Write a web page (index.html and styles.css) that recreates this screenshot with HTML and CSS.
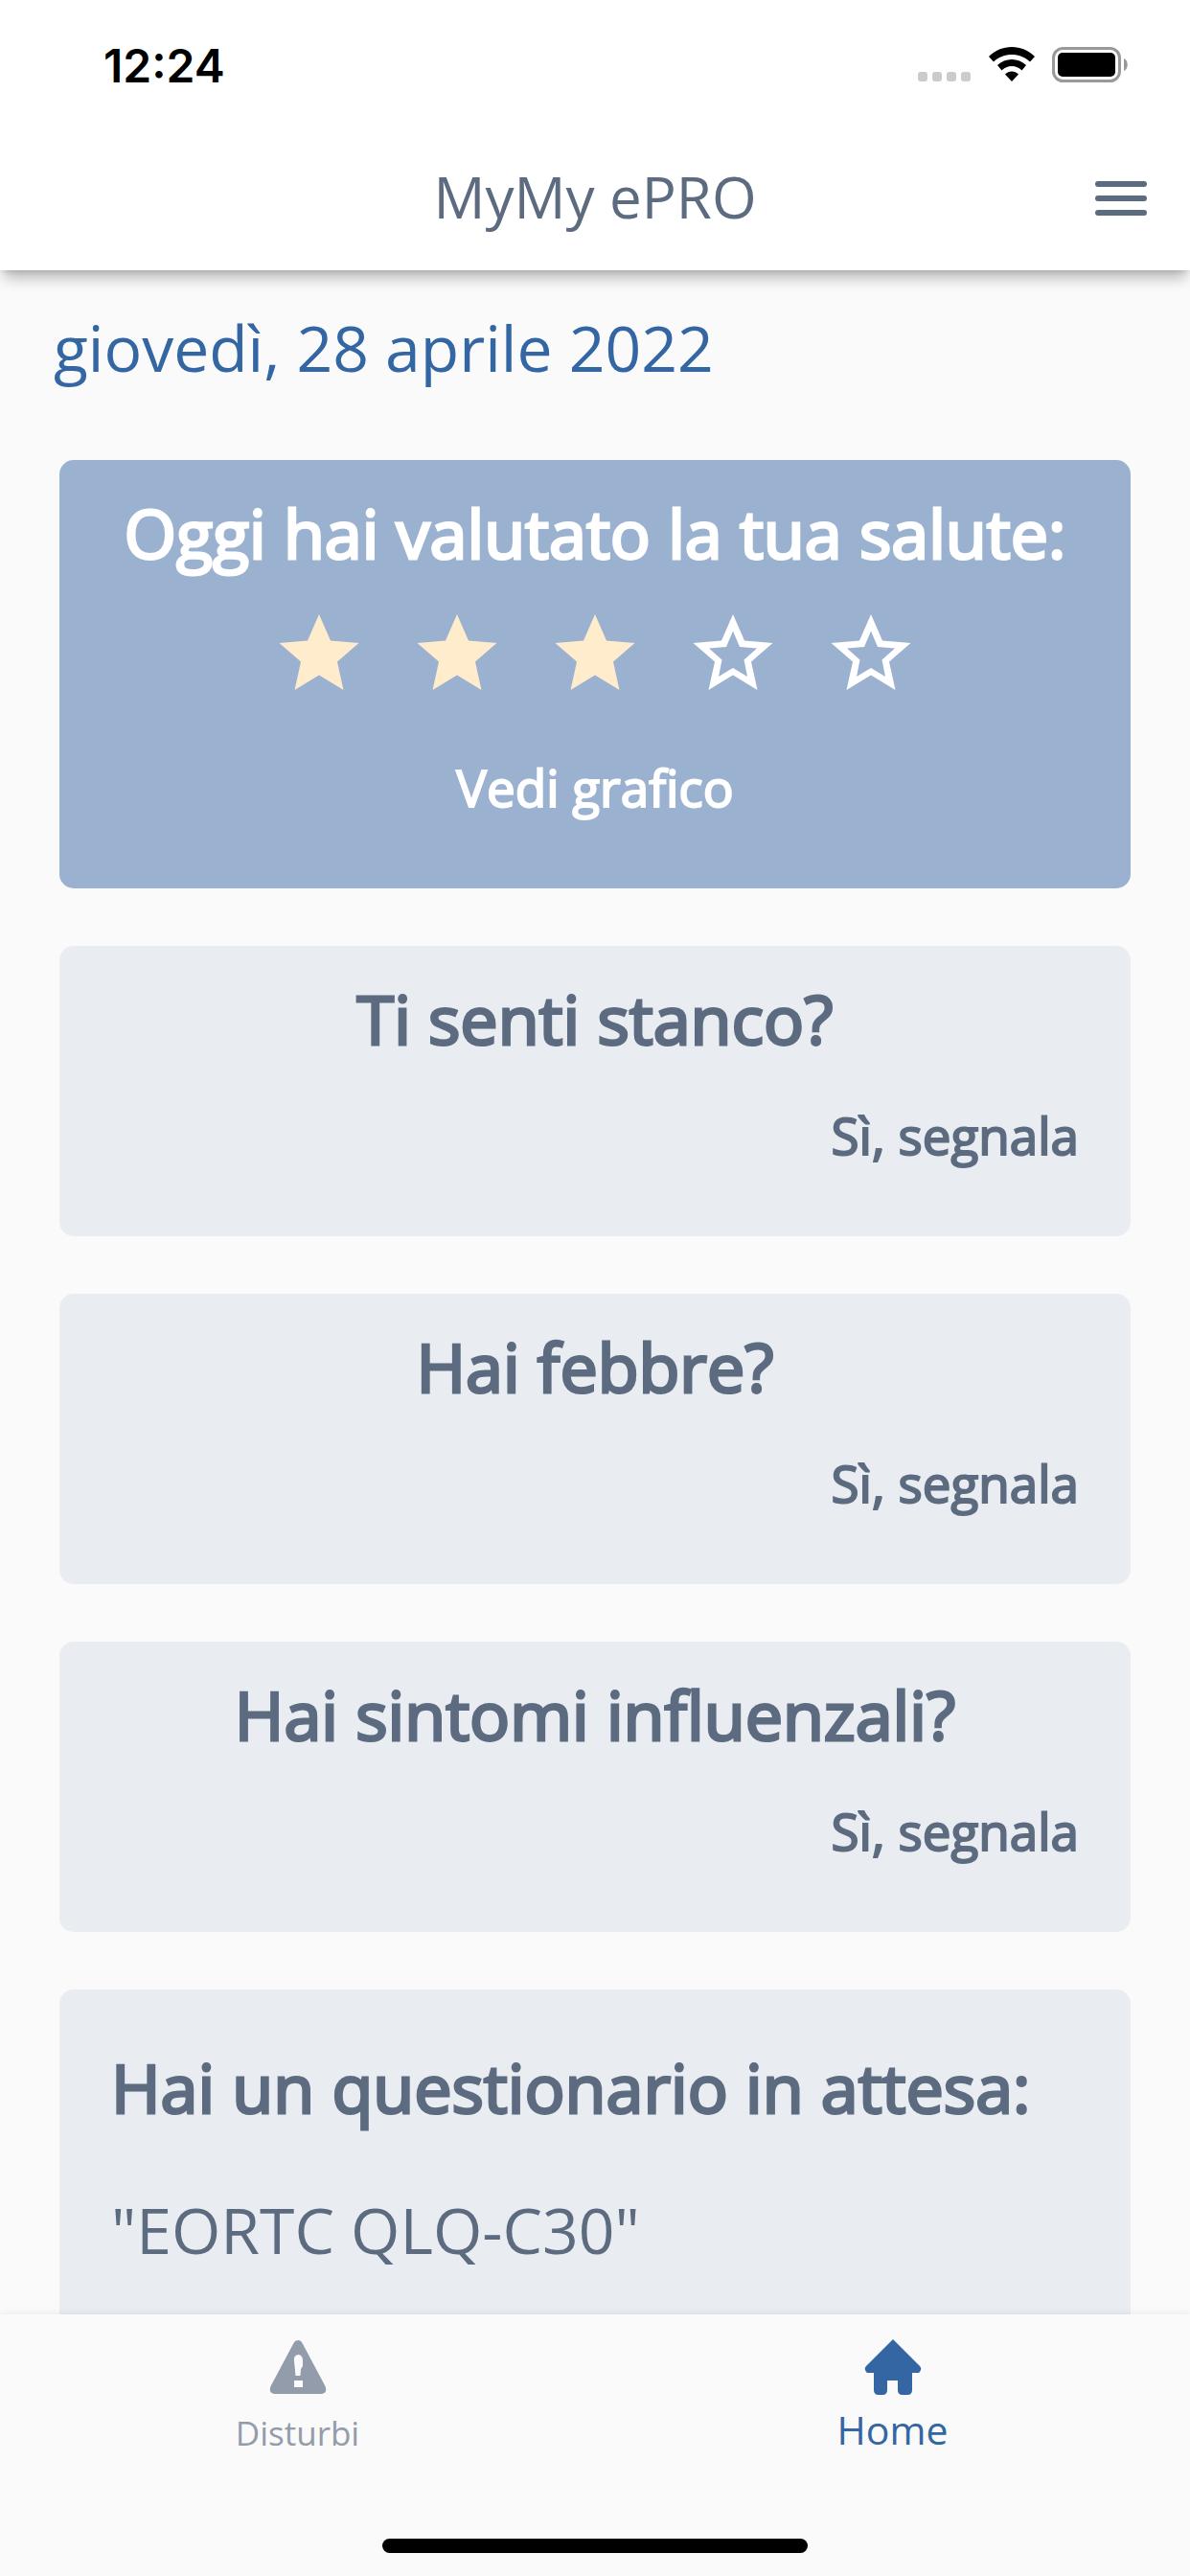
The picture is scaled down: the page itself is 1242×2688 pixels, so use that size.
FILE: index.html
```html
<!DOCTYPE html>
<html lang="it">
<head>
  <meta charset="UTF-8">
  <meta name="viewport" content="width=device-width, initial-scale=1">
  <title>MyMy ePRO</title>
  <link rel="stylesheet" href="styles.css">
</head>
<body>

<!-- Star shapes shared by the rating row -->
<svg class="sprite" aria-hidden="true">
  <symbol id="star-full" viewBox="0 0 84 80">
    <path d="M42 0L54 27.500L83.500 30L61 49.500L67.500 79L42 63.500L16.500 79L23 49.500L0.500 30L30 27.500Z"/>
  </symbol>
  <symbol id="star-empty" viewBox="0 0 84 80">
    <path fill-rule="evenodd" d="M42 0L54 27.500L83.500 30L61 49.500L67.500 79L42 63.500L16.500 79L23 49.500L0.500 30L30 27.500ZM42 17.500L35 34L17 35.500L30.500 47.500L27 65L42 56L57 65L53.500 47.500L67 35.500L49 34Z"/>
  </symbol>
</svg>

<header class="header">
  <div class="status-bar">
    <span class="clock">12:24</span>
    <div class="status-icons">
      <svg width="56" height="38" viewBox="0 0 56 38" fill="#cbcbcb">
        <rect x="0" y="26" width="10" height="10" rx="3"/>
        <rect x="15" y="26" width="10" height="10" rx="3"/>
        <rect x="30" y="26" width="10" height="10" rx="3"/>
        <rect x="45" y="26" width="10" height="10" rx="3"/>
      </svg>
      <svg width="48" height="38" viewBox="0 0 48 38">
        <path d="M24 0C33 0 41.500 3.500 48 10L43 15.500C38 10.500 31 8 24 8S10 10.500 5 15.500L0 10C6.500 3.500 15 0 24 0Z"/>
        <path d="M24 13C29.500 13 35 15 39 19L34.500 24.500C31.500 21.500 28 20 24 20S16.500 21.500 13.500 24.500L9 19C13 15 18.500 13 24 13Z"/>
        <path d="M24 25.500C26.500 25.500 29 26.500 31 28.500L24 36L17 28.500C19 26.500 21.500 25.500 24 25.500Z"/>
      </svg>
      <svg width="80" height="38" viewBox="0 0 80 38">
        <rect x="1.500" y="1.500" width="69" height="34" rx="10" fill="none" stroke="#999" stroke-width="3"/>
        <rect x="6" y="6" width="60" height="25" rx="5"/>
        <path d="M75 12C80 14 80 23 75 25Z" fill="#999"/>
      </svg>
    </div>
  </div>
  <div class="app-bar">
    <h1>MyMy ePRO</h1>
    <button class="menu" type="button" aria-label="Menu">
      <span></span>
      <span></span>
      <span></span>
    </button>
  </div>
</header>

<main class="content">
  <p class="date">giovedì, 28 aprile 2022</p>

  <section class="card rating">
    <h2>Oggi hai valutato la tua salute:</h2>
    <div class="stars" role="img" aria-label="3 / 5">
      <svg class="star full"><use href="#star-full"/></svg>
      <svg class="star full"><use href="#star-full"/></svg>
      <svg class="star full"><use href="#star-full"/></svg>
      <svg class="star"><use href="#star-empty"/></svg>
      <svg class="star"><use href="#star-empty"/></svg>
    </div>
    <button class="action" type="button">Vedi grafico</button>
  </section>

  <section class="card question">
    <h2>Ti senti stanco?</h2>
    <button class="action" type="button">Sì, segnala</button>
  </section>

  <section class="card question">
    <h2>Hai febbre?</h2>
    <button class="action" type="button">Sì, segnala</button>
  </section>

  <section class="card question">
    <h2>Hai sintomi influenzali?</h2>
    <button class="action" type="button">Sì, segnala</button>
  </section>

  <section class="card survey">
    <h2>Hai un questionario in attesa:</h2>
    <p>"EORTC QLQ-C30"</p>
  </section>
</main>

<footer class="footer">
  <nav class="tabs">
    <a class="tab" href="#disturbi">
      <svg width="60" height="58" viewBox="0 0 60 58">
        <path fill="currentColor" fill-rule="evenodd" d="M30 1Q33 1 34.500 4L58.500 49Q61 56 55 57H5Q-1 56 1.500 49L25.500 4Q27 1 30 1ZM30 16Q25 17 26 23L27.500 38H32.500L33 31L35 28V21Q34 16 30 16ZM26 43V50H35V43Z"/>
      </svg>
      <span>Disturbi</span>
    </a>
    <a class="tab active" href="#home">
      <svg width="60" height="58" viewBox="0 0 60 58">
        <path fill="currentColor" d="M30 0L58 28Q61 31 57 35H50V53Q50 58 45 58H40Q35 58 35 53V43H24V53Q24 58 19 58H15Q10 58 10 53V35H3Q-1 31 2 28Z"/>
      </svg>
      <span>Home</span>
    </a>
  </nav>
  <div class="home-indicator"></div>
</footer>

</body>
</html>
```
FILE: styles.css
```css
* {
  box-sizing: border-box;
}

body {
  display: flex;
  flex-direction: column;
  height: 100vh;
  margin: 0;
  font-family: "Open Sans", "Noto Sans", sans-serif;
  color: #5c6b80;
  background: #fafafa;
}

h1, h2, p {
  margin: 0;
  font-weight: 400;
}

button {
  padding: 0;
  border: 0;
  background: none;
  color: inherit;
  font-family: inherit;
  cursor: pointer;
}

.sprite {
  display: none;
}

/* Header */
.header {
  position: relative;
  z-index: 1;
  flex-shrink: 0;
  background: #fff;
  box-shadow: 0 12px 14px -4px rgba(0, 0, 0, 0.26), 0 4px 6px -3px rgba(0, 0, 0, 0.14);
}

.status-bar {
  display: flex;
  align-items: center;
  justify-content: space-between;
  height: 132px;
  padding: 4px 64px 0 108px;
  color: #000;
}

.clock {
  font-family: Inter, sans-serif;
  font-size: 48px;
  font-weight: 600;
}

.status-icons {
  display: flex;
  gap: 18px;
}

.app-bar {
  display: grid;
  grid-template-columns: 1fr auto 1fr;
  align-items: center;
  height: 150px;
  padding: 0 45px;
}

.app-bar h1 {
  grid-column: 2;
  padding-bottom: 4px;
  font-size: 60px;
  line-height: 84px;
}

.menu {
  display: flex;
  flex-direction: column;
  gap: 9px;
  justify-self: end;
  width: 54px;
}

.menu span {
  height: 6px;
  border-radius: 3px;
  background: #5c6b80;
}

/* Page content */
.content {
  display: flex;
  flex: 1;
  flex-direction: column;
  gap: 60px;
  min-height: 0;
  padding: 32px 62px 0;
  overflow: hidden;
}

.date {
  margin: 0 -6px 10px;
  font-size: 66px;
  line-height: 96px;
  color: #3366a3;
}

.card {
  display: flex;
  flex-direction: column;
  flex-shrink: 0;
  padding: 28px 54px 69px;
  border-radius: 15px;
  background: #e9ecf1;
}

/* Headings and actions are the regular face thickened by a stroke */
.card h2 {
  font-size: 70px;
  line-height: 96px;
  -webkit-text-stroke: 3px currentColor;
}

.action {
  font-size: 53px;
  line-height: 72px;
  -webkit-text-stroke: 2px currentColor;
}

.rating {
  align-items: center;
  color: #fff;
  background: #9ab1d0;
}

.stars {
  display: flex;
  gap: 60px;
  margin: 37px 0 65px;
}

.star {
  width: 84px;
  height: 80px;
  fill: #fff;
}

.star.full {
  fill: #ffeccc;
}

.question h2 {
  text-align: center;
}

.question .action {
  align-self: flex-end;
  margin-top: 38px;
}

.survey {
  gap: 52px;
  padding-top: 54px;
}

.survey p {
  font-size: 66px;
  line-height: 96px;
}

/* Bottom navigation */
.footer {
  position: relative;
  flex-shrink: 0;
  padding-bottom: 24px;
  background: #fafafa;
  box-shadow: 0 -1px 8px rgba(0, 0, 0, 0.07);
}

.tabs {
  display: flex;
  height: 234px;
}

.tab {
  display: flex;
  flex: 1;
  flex-direction: column;
  align-items: center;
  gap: 12px;
  padding-top: 26px;
  font-size: 35px;
  line-height: 56px;
  color: #939caa;
  text-decoration: none;
}

.tab.active {
  font-size: 41px;
  line-height: 48px;
  color: #3366a3;
}

.home-indicator {
  width: 444px;
  height: 15px;
  margin: 0 auto;
  border-radius: 8px;
  background: #000;
}
```
